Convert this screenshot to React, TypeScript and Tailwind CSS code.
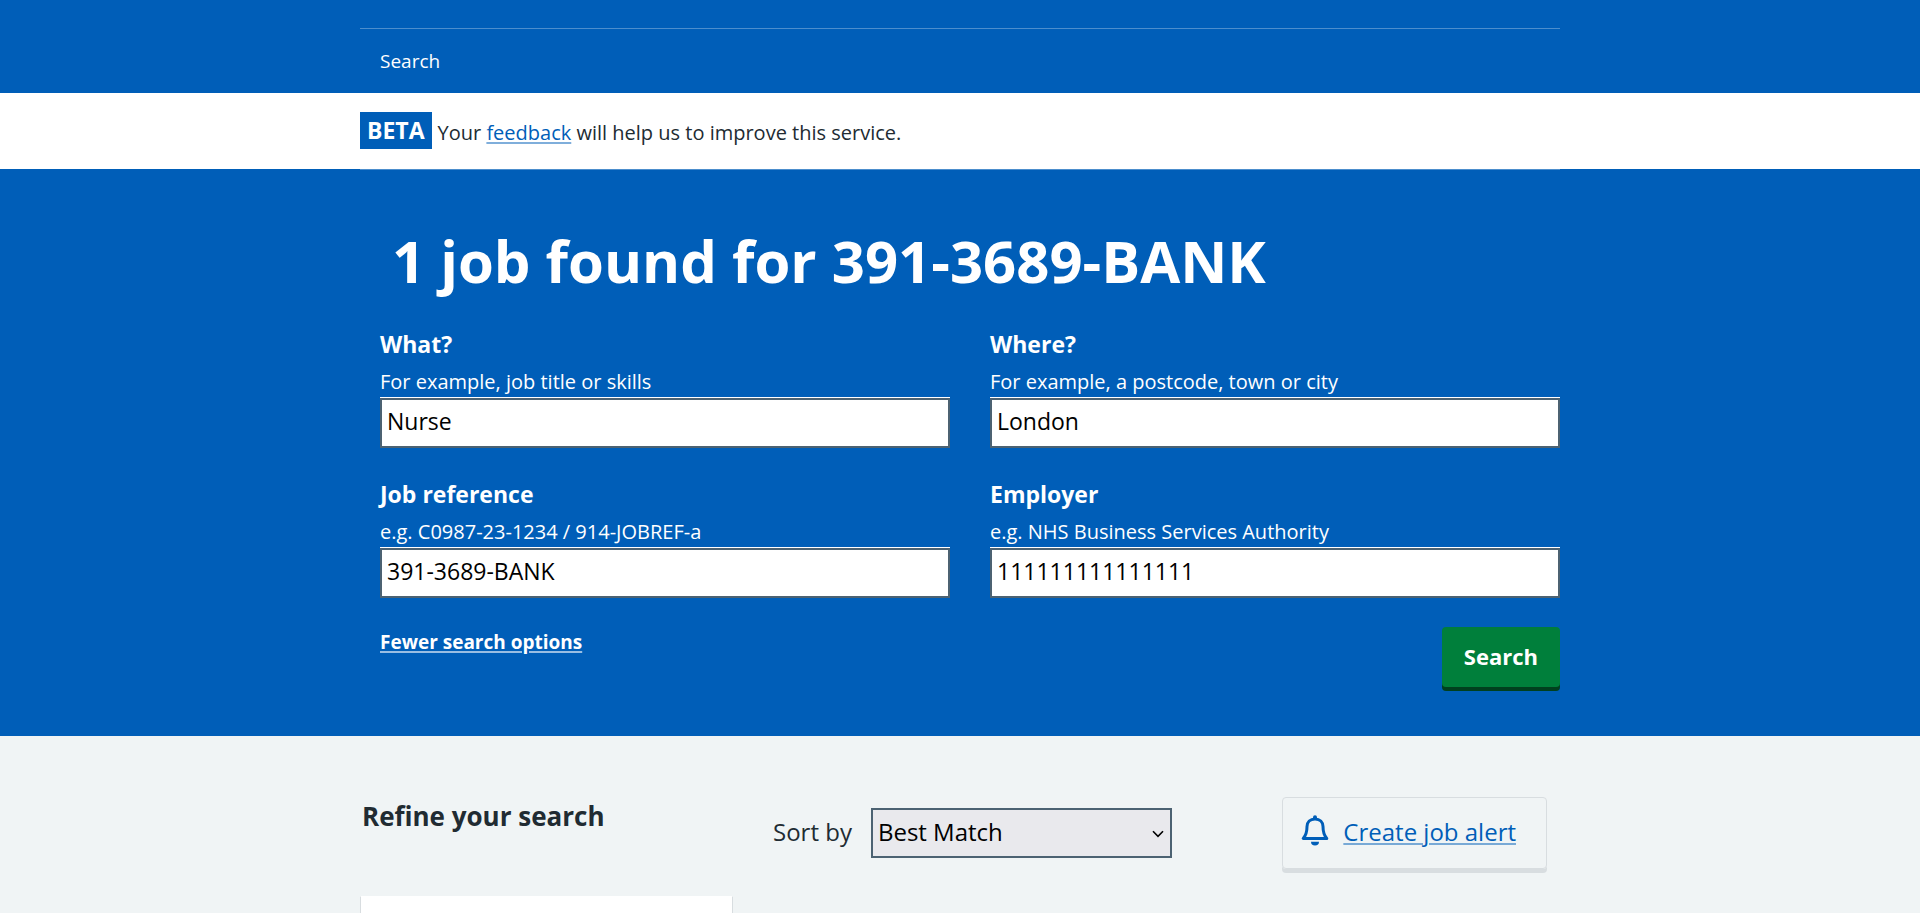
import { useState } from "react";

type FieldProps = { id: string; label: string; hint: string; initial: string };

function Field({ id, label, hint, initial }: FieldProps) {
  const [value, setValue] = useState(initial);
  return (
    <div className="flex flex-col">
      <label htmlFor={id} className="text-[23px] leading-8 font-bold">
        {label}
      </label>
      <span id={`${id}-hint`} className="mt-1.5 h-8 border-b border-white text-[20px] leading-8">
        {hint}
      </span>
      <input
        id={id}
        aria-describedby={`${id}-hint`}
        value={value}
        onChange={(e) => setValue(e.target.value)}
        className="h-[50px] w-full border-2 border-[#4c6272] bg-white px-[5px] pb-1 text-[23px] text-black"
      />
    </div>
  );
}

function Bell() {
  return (
    <svg viewBox="0 0 28 36" className="h-9 w-7 shrink-0" aria-hidden="true">
      <path
        d="M14 3.9C9.2 3.9 6 7.2 6 11.6C6 16.6 5.4 20 2.2 23.5H25.8C22.6 20 22 16.6 22 11.6C22 7.2 18.8 3.9 14 3.9Z"
        fill="none"
        stroke="#005eb8"
        strokeWidth="3"
        strokeLinejoin="round"
      />
      <path d="M12 4V2.2a2 2 0 0 1 4 0V4Z" fill="#005eb8" />
      <path d="M10 26.8h8a4 3.8 0 0 1-8 0Z" fill="#005eb8" />
    </svg>
  );
}

export default function App() {
  return (
    <div className="min-h-screen bg-[#f0f4f5] font-['Open_Sans',sans-serif] text-[#212b32]">
      <header className="bg-[#005eb8] pt-7 text-white">
        <nav className="mx-auto flex h-[65px] max-w-[1200px] items-center border-t border-[#4c8ecd] px-5">
          <a href="#search" className="text-[19px] leading-7">
            Search
          </a>
        </nav>
      </header>

      <div className="bg-white">
        <div className="mx-auto flex h-[76px] max-w-[1200px] items-center pb-0.5">
          <strong className="bg-[#005eb8] px-[7px] text-[23px] leading-[37px] font-bold text-white">BETA</strong>
          <p className="ml-[6px] pt-1.5 text-[20px] leading-7">
            Your{" "}
            <a
              href="#feedback"
              className="text-[#005eb8] underline decoration-[#005eb8]/50 decoration-2 underline-offset-2"
            >
              feedback
            </a>{" "}
            will help us to improve this service.
          </p>
        </div>
      </div>

      <main>
        <section className="bg-[#005eb8] pb-[49px] text-white">
          <div className="mx-auto max-w-[1200px] border-t border-[#4c8ecd] pl-5">
            <h1 className="pt-[53px] pl-3 text-[58px] leading-[76px] font-bold">1 job found for 391-3689-BANK</h1>
            <form onSubmit={(e) => e.preventDefault()} className="mt-[29px]">
              <div className="grid grid-cols-2 gap-x-10 gap-y-[30px]">
                <Field id="what" label="What?" hint="For example, job title or skills" initial="Nurse" />
                <Field id="where" label="Where?" hint="For example, a postcode, town or city" initial="London" />
                <Field id="ref" label="Job reference" hint="e.g. C0987-23-1234 / 914-JOBREF-a" initial="391-3689-BANK" />
                <Field id="employer" label="Employer" hint="e.g. NHS Business Services Authority" initial="111111111111111" />
              </div>
              <div className="mt-[29px] flex items-start justify-between">
                <a
                  href="#options"
                  className="text-[19px] leading-[30px] font-bold underline decoration-white/60 decoration-2 underline-offset-2"
                >
                  Fewer search options
                </a>
                <button
                  type="submit"
                  className="h-[60px] rounded bg-[#007f3b] px-[22px] pb-0.5 text-[22px] font-bold shadow-[0_4px_0_#00401e]"
                >
                  Search
                </button>
              </div>
            </form>
          </div>
        </section>

        <section className="mx-auto flex max-w-[1200px] items-start pt-[61px]">
          <div className="w-[373px] shrink-0">
            <h2 className="pl-0.5 text-[26px] leading-[38px] font-bold">Refine your search</h2>
            <div className="mt-[61px] h-[17px] border-x border-t border-[#d8dde0] border-t-white bg-white" />
          </div>
          <div className="ml-10 flex grow items-center justify-between pr-[13px]">
            <div className="flex items-center gap-[19px]">
              <label htmlFor="sort" className="pb-0.5 text-[24px] leading-9">
                Sort by
              </label>
              <div className="relative">
                <select
                  id="sort"
                  className="h-[50px] w-[301px] appearance-none border-2 border-[#4c6272] bg-[#e9e9ed] pb-0.5 pl-[5px] text-[24px] text-black"
                >
                  <option>Best Match</option>
                </select>
                <svg
                  viewBox="0 0 12 8"
                  className="pointer-events-none absolute top-[22px] right-2 h-2 w-3"
                  aria-hidden="true"
                >
                  <path d="M1 1.2L6 6.4L11 1.2" fill="none" stroke="#000" strokeWidth="1.6" />
                </svg>
              </div>
            </div>
            <a
              href="#alert"
              className="flex h-[72px] items-center gap-[14px] rounded border border-[#d8dde0] pr-[30px] pl-[18px] text-[24px] text-[#005eb8] shadow-[0_4px_0_#d8dde0]"
            >
              <Bell />
              <span className="pb-0.5 underline decoration-[#005eb8]/50 decoration-2 underline-offset-2">
                Create job alert
              </span>
            </a>
          </div>
        </section>
      </main>
    </div>
  );
}
